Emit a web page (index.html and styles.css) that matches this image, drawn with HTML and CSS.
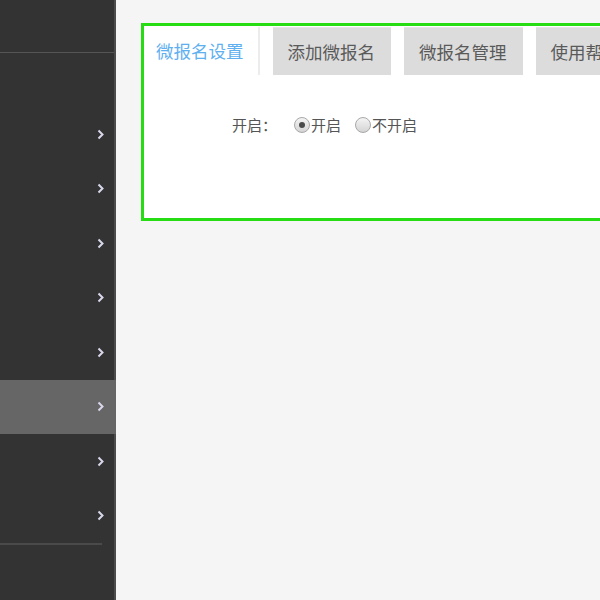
FILE: index.html
```html
<!DOCTYPE html>
<html>
    <head>
        <title>微报名设置</title>
        <link rel="stylesheet" href="styles.css">
    </head>
    <body>
        <div class='mainContainer'>
            <div class='sidebar'>
                <div class='sideTop'></div>
                <ul class='sideMenu'>
                    <li><svg class='arrow' viewBox='0 0 7 11' width='7' height='11'><path d='M1.5 1.5l4 4-4 4'/></svg></li>
                    <li><svg class='arrow' viewBox='0 0 7 11' width='7' height='11'><path d='M1.5 1.5l4 4-4 4'/></svg></li>
                    <li><svg class='arrow' viewBox='0 0 7 11' width='7' height='11'><path d='M1.5 1.5l4 4-4 4'/></svg></li>
                    <li><svg class='arrow' viewBox='0 0 7 11' width='7' height='11'><path d='M1.5 1.5l4 4-4 4'/></svg></li>
                    <li><svg class='arrow' viewBox='0 0 7 11' width='7' height='11'><path d='M1.5 1.5l4 4-4 4'/></svg></li>
                    <li class='active'><svg class='arrow' viewBox='0 0 7 11' width='7' height='11'><path d='M1.5 1.5l4 4-4 4'/></svg></li>
                    <li><svg class='arrow' viewBox='0 0 7 11' width='7' height='11'><path d='M1.5 1.5l4 4-4 4'/></svg></li>
                    <li><svg class='arrow' viewBox='0 0 7 11' width='7' height='11'><path d='M1.5 1.5l4 4-4 4'/></svg></li>
                </ul>
                <div class='sideBottom'></div>
            </div>
            <div class='content'>
                <div class='panel'>
                    <div class='tabs'>
                        <div class='tab current'>微报名设置</div>
                        <div class='tab'>添加微报名</div>
                        <div class='tab'>微报名管理</div>
                        <div class='tab'>使用帮助</div>
                    </div>
                    <div class='formRow'>
                        <span class='formLabel'>开启：</span>
                        <label class='radio'><span class='dot checked'></span>开启</label>
                        <label class='radio'><span class='dot'></span>不开启</label>
                    </div>
                </div>
            </div>
        </div>
    </body>
</html>
```

FILE: styles.css
```css
html, body, .mainContainer {
    width: 100%;
    height: 100%;
    margin: 0;
}
body {
    font-family: "Noto Sans CJK SC", "Noto Sans", sans-serif;
    color: #555;
    background-color: #f5f5f5;
    overflow: hidden;
}
.mainContainer {
    display: flex;
}
.sidebar {
    width: 114px;
    height: 100%;
    flex-shrink: 0;
    background-color: #333;
    border-right: 2px solid #4c4c4c;
}
.sideTop {
    height: 52px;
    border-bottom: 1px solid #555;
}
.sideMenu {
    list-style: none;
    margin: 0;
    padding: 54px 0 0 0;
}
.sideMenu li {
    height: 54.5px;
    display: flex;
    align-items: center;
    justify-content: flex-end;
    padding-right: 10px;
}
.sideMenu li.active {
    background-color: #666;
    margin-right: -2px;
    padding-right: 12px;
}
.arrow path {
    fill: none;
    stroke: #d8d8ec;
    stroke-width: 2;
}
.sideBottom {
    width: 102px;
    border-top: 2px solid #4a4a4a;
}
.content {
    flex-grow: 1;
    padding: 23px 0 0 25px;
    overflow: hidden;
}
.panel {
    width: 600px;
    height: 191px;
    border: 3px solid #26dd14;
    background-color: #fff;
    padding: 1px 0 0 1px;
}
.tabs {
    display: flex;
    height: 48px;
}
.tab {
    flex-shrink: 0;
    padding: 0 16px 0 15px;
    margin-right: 13px;
    line-height: 47px;
    font-size: 17.5px;
    white-space: nowrap;
    color: #5a5a5a;
    background-color: #dcdcdc;
    border-top: 1px solid #e6e6e6;
    box-sizing: border-box;
}
.tab.current {
    padding: 0 14px 0 11px;
    line-height: 48px;
    color: #60b0f0;
    background-color: #fff;
    border-top: none;
    border-right: 2px solid #ececec;
}
.formRow {
    display: flex;
    align-items: center;
    margin: 39px 0 0 87px;
    font-size: 15px;
    line-height: 22px;
}
.formLabel {
    width: 62px;
}
.radio {
    display: inline-flex;
    align-items: center;
    margin-right: 14px;
}
.dot {
    width: 14px;
    height: 14px;
    border: 1px solid #a8a8a8;
    border-radius: 50%;
    background: linear-gradient(#f4f4f4, #d4d4d4);
    margin-right: 1px;
    display: inline-flex;
    align-items: center;
    justify-content: center;
}
.dot.checked::after {
    content: '';
    width: 6px;
    height: 6px;
    border-radius: 50%;
    background-color: #4a4a4a;
}
```
